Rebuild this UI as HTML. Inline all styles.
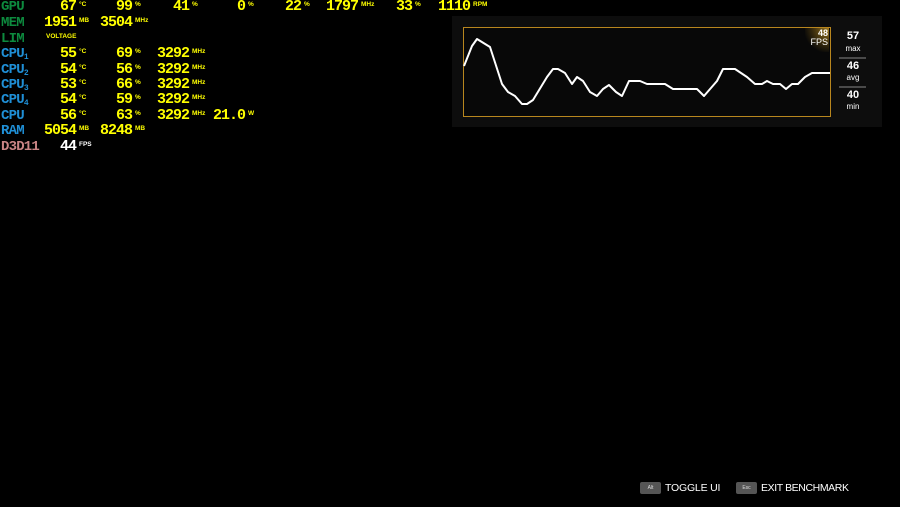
<!DOCTYPE html><html><head><style>
body{margin:0;width:900px;height:507px;background:#000;overflow:hidden;position:relative;font-family:"Liberation Mono",monospace;font-weight:bold}
.l,.n,.u{position:absolute;line-height:14px;white-space:nowrap}
.l{left:1px;font-size:14px;letter-spacing:-0.8px;font-family:"Liberation Mono",monospace;font-weight:bold}
.n{font-size:15px;letter-spacing:-1px;color:#ff0;text-align:right;width:60px}
.u{font-size:6.5px;color:#ff0;font-family:"Liberation Sans",sans-serif;letter-spacing:0}
.g{color:#0d8a3e}.b{color:#1f8fd6}.p{color:#c98585}
sub{font-size:8px;vertical-align:-2px;letter-spacing:0}
</style></head><body>
<div id="t"></div>
<script>
var rows=[
[7,'GPU','g',[[76,'67','°C'],[132,'99','%'],[189,'41','%'],[245,'0','%'],[301,'22','%'],[358,'1797','MHz'],[412,'33','%'],[470,'1110','RPM']]],
[23,'MEM','g',[[76,'1951','MB'],[132,'3504','MHz']]],
[39,'LIM','g',[]],
[54,'CPU<sub>1</sub>','b',[[76,'55','°C'],[132,'69','%'],[189,'3292','MHz']]],
[70,'CPU<sub>2</sub>','b',[[76,'54','°C'],[132,'56','%'],[189,'3292','MHz']]],
[85,'CPU<sub>3</sub>','b',[[76,'53','°C'],[132,'66','%'],[189,'3292','MHz']]],
[100,'CPU<sub>4</sub>','b',[[76,'54','°C'],[132,'59','%'],[189,'3292','MHz']]],
[116,'CPU','b',[[76,'56','°C'],[132,'63','%'],[189,'3292','MHz'],[245,'21.0','W']]],
[131,'RAM','b',[[76,'5054','MB'],[132,'8248','MB']]],
[147,'D3D11','p',[[76,'44','FPS']]]];
var h='';rows.forEach(function(r){h+='<div class="l '+r[2]+'" style="top:'+(r[0]-7)+'px">'+r[1]+'</div>';
r[3].forEach(function(c){var col=r[1]=='D3D11'?'color:#fff;':'';h+='<div class="n" style="'+col+'top:'+(r[0]-7)+'px;left:'+(c[0]-60)+'px">'+c[1]+'</div><div class="u" style="'+col+'top:'+(r[0]-9)+'px;left:'+(c[0]+3)+'px">'+c[2]+'</div>';});});
h+='<div class="u" style="top:30px;left:46px">VOLTAGE</div>';
document.getElementById('t').innerHTML=h;
</script>
<div style="position:absolute;left:452px;top:16px;width:430px;height:111px;background:#0d0d0d"></div>
<div style="position:absolute;left:463px;top:27px;width:366px;height:88px;border:1px solid #b8861e;background:#080808"></div>
<div style="position:absolute;left:805px;top:28px;width:24px;height:24px;background:radial-gradient(circle at 100% 0,#a07a20 0,rgba(120,90,20,.4) 50%,transparent 75%)"></div>
<div style="position:absolute;left:806px;top:29px;width:22px;text-align:right;color:#fff;font:bold 9px 'Liberation Sans',sans-serif;line-height:9px">48<br><span style="font-weight:normal">FPS</span></div>
<svg style="position:absolute;left:0;top:0" width="900" height="507"><polyline fill="none" stroke="#fff" stroke-width="2" stroke-linejoin="round" points="464,66 472,46 477,39 490,47 502,84 508,92 515,96 522,104 527,104 533,100 547,77 553,69 558,69 565,73 572,84 577,77 583,81 590,92 597,96 603,89 609,85 616,92 622,96 629,81 640,81 647,84 665,84 673,89 697,89 704,96 717,81 723,69 735,69 747,77 755,84 762,84 767,81 773,84 780,84 786,89 792,84 798,84 805,77 812,73 830,73"/>
<line x1="839" y1="58" x2="866" y2="58" stroke="#888"/><line x1="839" y1="87" x2="866" y2="87" stroke="#888"/></svg>
<div style="position:absolute;left:836px;width:34px;text-align:center;color:#fff;font-family:'Liberation Sans',sans-serif;font-weight:normal">
<div style="position:absolute;top:30px;width:34px;font:bold 11px 'Liberation Sans'">57</div><div style="position:absolute;top:44px;width:34px;font-size:8px">max</div>
<div style="position:absolute;top:60px;width:34px;font:bold 11px 'Liberation Sans'">46</div><div style="position:absolute;top:73px;width:34px;font-size:8px">avg</div>
<div style="position:absolute;top:89px;width:34px;font:bold 11px 'Liberation Sans'">40</div><div style="position:absolute;top:102px;width:34px;font-size:8px">min</div></div>
<div style="position:absolute;top:482px;left:640px;width:21px;height:12px;background:#555;border-radius:2px;color:#ddd;font:5px 'Liberation Sans';text-align:center;line-height:12px">Alt</div>
<div style="position:absolute;top:482px;left:665px;color:#fff;font:10.5px 'Liberation Sans',sans-serif;line-height:13px;letter-spacing:-0.2px">TOGGLE UI</div>
<div style="position:absolute;top:482px;left:736px;width:21px;height:12px;background:#555;border-radius:2px;color:#ddd;font:5px 'Liberation Sans';text-align:center;line-height:12px">Esc</div>
<div style="position:absolute;top:482px;left:761px;color:#fff;font:10.5px 'Liberation Sans',sans-serif;line-height:13px;letter-spacing:-0.4px">EXIT BENCHMARK</div>
</body></html>
